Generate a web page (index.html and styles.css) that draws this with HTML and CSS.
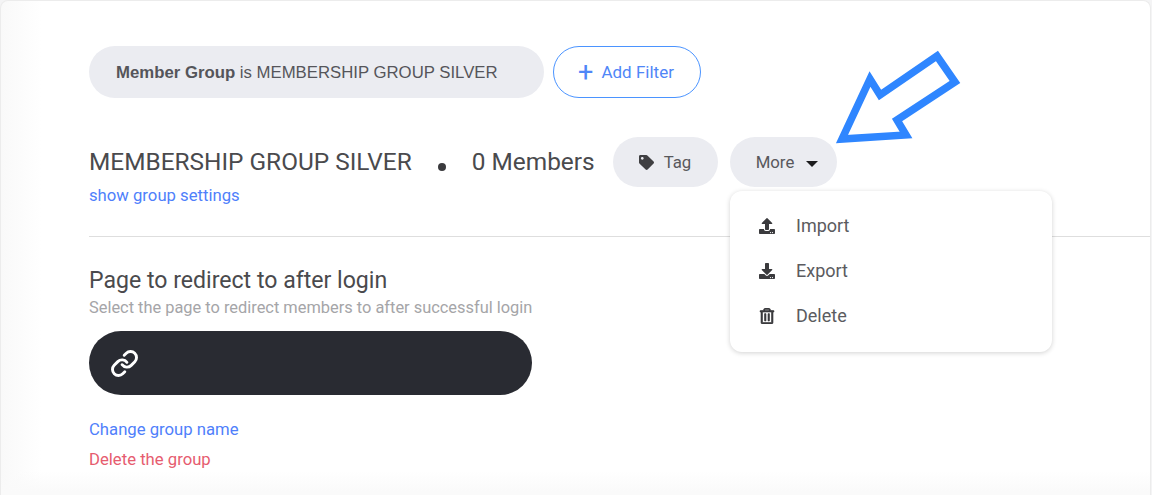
FILE: index.html
```html
<!DOCTYPE html>
<html lang="en">
<head>
<meta charset="utf-8">
<title>Member Group</title>
<link rel="stylesheet" href="styles.css">
</head>
<body>
<main class="card">
  <div class="filters">
    <div class="filter-pill"><span><b>Member Group</b> is MEMBERSHIP GROUP SILVER</span></div>
    <button class="add-filter"><span class="plus">+</span>Add Filter</button>
  </div>
  <div class="title-row">
    <h1 class="title">MEMBERSHIP GROUP SILVER</h1>
    <span class="dot"></span>
    <span class="count">0 Members</span>
    <button class="btn btn-tag">
      <svg class="ico-tag" viewBox="0 0 512 512"><path d="M0 252.118V48C0 21.49 21.49 0 48 0h204.118a48 48 0 0 1 33.941 14.059l211.882 211.882c18.745 18.745 18.745 49.137 0 67.882L293.823 497.941c-18.745 18.745-49.137 18.745-67.882 0L14.059 286.059A48 48 0 0 1 0 252.118zM112 64c-26.51 0-48 21.49-48 48s21.49 48 48 48 48-21.49 48-48-21.49-48-48-48z"/></svg>
      Tag
    </button>
    <button class="btn btn-more">More<span class="caret"></span></button>
  </div>
  <a class="link settings">show group settings</a>
  <hr class="rule">
  <h2 class="sub-title">Page to redirect to after login</h2>
  <p class="hint">Select the page to redirect members to after successful login</p>
  <div class="url-field">
    <svg class="ico-link" viewBox="0 0 24 24"><path d="M10 13a5 5 0 0 0 7.54.54l3-3a5 5 0 0 0-7.07-7.07l-1.72 1.71"/><path d="M14 11a5 5 0 0 0-7.54-.54l-3 3a5 5 0 0 0 7.07 7.07l1.71-1.71"/></svg>
  </div>
  <a class="link change">Change group name</a>
  <a class="link danger">Delete the group</a>

  <ul class="menu">
    <li class="menu-item">
      <svg class="ico-menu" viewBox="0 0 512 512"><path d="M296 384h-80c-13.3 0-24-10.7-24-24V192h-87.7c-17.8 0-26.7-21.5-14.1-34.1L242.3 5.7c7.5-7.5 19.8-7.5 27.3 0l152.2 152.2c12.6 12.6 3.7 34.1-14.1 34.1H320v168c0 13.3-10.7 24-24 24zm216-8v112c0 13.3-10.7 24-24 24H24c-13.3 0-24-10.7-24-24V376c0-13.3 10.7-24 24-24h136v8c0 30.9 25.1 56 56 56h80c30.9 0 56-25.1 56-56v-8h136c13.3 0 24 10.7 24 24zm-124 88c0-11-9-20-20-20s-20 9-20 20 9 20 20 20 20-9 20-20zm64 0c0-11-9-20-20-20s-20 9-20 20 9 20 20 20 20-9 20-20z"/></svg>
      Import
    </li>
    <li class="menu-item">
      <svg class="ico-menu" viewBox="0 0 512 512"><path d="M216 0h80c13.3 0 24 10.7 24 24v168h87.7c17.8 0 26.7 21.5 14.1 34.1L269.7 378.3c-7.5 7.5-19.8 7.5-27.3 0L90.1 226.1c-12.6-12.6-3.7-34.1 14.1-34.1H192V24c0-13.3 10.7-24 24-24zm296 376v112c0 13.3-10.7 24-24 24H24c-13.3 0-24-10.7-24-24V376c0-13.3 10.7-24 24-24h146.7l49 49c20.1 20.1 52.5 20.1 72.6 0l49-49H488c13.3 0 24 10.7 24 24zm-124 88c0-11-9-20-20-20s-20 9-20 20 9 20 20 20 20-9 20-20zm64 0c0-11-9-20-20-20s-20 9-20 20 9 20 20 20 20-9 20-20z"/></svg>
      Export
    </li>
    <li class="menu-item">
      <svg class="ico-menu ico-trash" viewBox="0 0 448 512"><path d="M268 416h24a12 12 0 0 0 12-12V188a12 12 0 0 0-12-12h-24a12 12 0 0 0-12 12v216a12 12 0 0 0 12 12zM432 80h-82.41l-34-56.7A48 48 0 0 0 274.41 0H173.59a48 48 0 0 0-41.16 23.3L98.41 80H16A16 16 0 0 0 0 96v16a16 16 0 0 0 16 16h16v336a48 48 0 0 0 48 48h288a48 48 0 0 0 48-48V128h16a16 16 0 0 0 16-16V96a16 16 0 0 0-16-16zM171.84 50.91A6 6 0 0 1 177 48h94a6 6 0 0 1 5.15 2.91L293.61 80H154.39zM368 464H80V128h288zm-212-48h24a12 12 0 0 0 12-12V188a12 12 0 0 0-12-12h-24a12 12 0 0 0-12 12v216a12 12 0 0 0 12 12z"/></svg>
      Delete
    </li>
  </ul>

  <svg class="arrow" viewBox="0 0 1152 495"><polygon points="842,139 870,79 880,95 937,56 955,82 897,120 906,135"/></svg>
</main>
</body>
</html>
```
FILE: styles.css
```css
* { box-sizing: border-box; }
html, body { margin: 0; height: 100%; }
body {
  background: #f4f4f5;
  font-family: Roboto, "Liberation Sans", sans-serif;
  color: #4a4a4d;
  overflow: hidden;
}
.card {
  position: relative;
  height: 495px;
  margin-right: 1px;
  padding: 45px 0 0 88px;
  background:
    linear-gradient(180deg, rgba(250, 250, 250, 0) 470px, #fafafa 490px),
    linear-gradient(90deg, #f9f9f9 0, #fff 40px);
  border: 1px solid #ececec;
  border-bottom: 0;
  border-radius: 8px 8px 0 0;
}
.filters { display: flex; gap: 9px; }
.filter-pill {
  width: 455px;
  height: 52px;
  padding: 2px 0 0 27px;
  display: flex;
  align-items: center;
  background: #ebecf1;
  border-radius: 26px;
  font-family: "Liberation Sans", Arial, sans-serif;
  font-size: 16.75px;
  color: #55555a;
}
.filter-pill b { font-weight: 700; }
.add-filter {
  width: 148px;
  height: 52px;
  border: 1px solid #4b94ff;
  border-radius: 26px;
  background: #fff;
  color: #4f86f7;
  font: 17px Roboto, sans-serif;
  display: flex;
  align-items: center;
  justify-content: center;
  padding: 0 2px 0 0;
}
.plus { font-size: 27px; line-height: 1; margin-right: 8px; font-weight: 400; }
.title-row { display: flex; align-items: center; margin-top: 39px; height: 50px; }
.title { margin: 0 0 2px; font-size: 24.4px; font-weight: 400; }
.dot {
  width: 8px;
  height: 8px;
  margin: 9px 26px 0 26px;
  border-radius: 50%;
  background: #3a3a3d;
}
.count { margin-bottom: 2px; font-size: 24.4px; }
.btn {
  height: 50px;
  border: 0;
  border-radius: 25px;
  background: #ebecf1;
  color: #58585c;
  font: 16.8px Roboto, sans-serif;
  display: flex;
  align-items: center;
  padding: 0;
}
.btn-tag { width: 105px; margin-left: 18px; padding-left: 26px; }
.ico-tag { width: 15px; height: 15px; margin-right: 10px; fill: #3f3f42; }
.btn-more { width: 107px; margin-left: 12px; padding-left: 26px; }
.caret {
  margin-left: 12px;
  margin-top: 3px;
  border-left: 6.5px solid transparent;
  border-right: 6.5px solid transparent;
  border-top: 6.5px solid #1c1c1e;
}
.link { display: block; font-size: 16.7px; line-height: 20px; color: #4f7ffb; }
.settings { margin-top: -1px; }
.rule { margin: 30px 0 0; border: 0; border-top: 1px solid #dedede; }
.sub-title { margin: 31px 0 0; font-size: 23.1px; line-height: 26px; font-weight: 400; }
.hint { margin: 4px 0 0; font-size: 16.4px; line-height: 19px; color: #a5a5a8; }
.url-field {
  width: 443px;
  height: 64px;
  margin-top: 14px;
  padding-left: 21px;
  display: flex;
  align-items: center;
  background: #292b32;
  border-radius: 32px;
}
.ico-link { width: 29px; height: 29px; fill: none; stroke: #fff; stroke-width: 2.4; stroke-linecap: round; stroke-linejoin: round; }
.change { margin-top: 25px; }
.danger { margin-top: 10px; color: #e65c6f; }
.menu {
  position: absolute;
  left: 729px;
  top: 190px;
  width: 322px;
  height: 161px;
  margin: 0;
  padding: 12px 0 0 28px;
  list-style: none;
  background: #fff;
  border-radius: 12px;
  box-shadow: 0 1px 5px rgba(0, 0, 0, 0.18);
}
.menu-item {
  height: 45px;
  display: flex;
  align-items: center;
  font-size: 18px;
  color: #5b5b60;
}
.ico-menu { width: 18px; height: 16px; margin-right: 20px; fill: #3a3a3d; }
.ico-trash { stroke: #3a3a3d; stroke-width: 20; }
.arrow {
  position: absolute;
  left: -1px;
  top: -1px;
  width: 1152px;
  height: 495px;
  pointer-events: none;
}
.arrow polygon { fill: none; stroke: #2f86ff; stroke-width: 7.5; }
```
